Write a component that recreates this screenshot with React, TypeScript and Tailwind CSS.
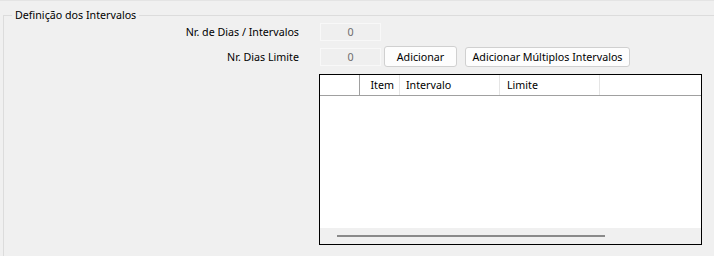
import React from "react";

export default function App() {
  const font = { fontFamily: '"Noto Sans", "Open Sans", sans-serif' };
  return (
    <div
      className="w-[714px] h-[256px] overflow-hidden bg-[#f0f0f0] border-t border-[#e4e4e4] text-[10.7px] leading-[14px] text-black whitespace-nowrap"
      style={font}
    >
      <fieldset className="ml-[3px] mt-[7px] w-[760px] h-[300px] border border-[#dcdcdc] px-0">
        <legend className="ml-[8px] px-[3px] leading-[14px]">Definição dos Intervalos</legend>
        <div className="mt-[1px] flex items-center h-[18px]">
          <div className="w-[295px] text-right">Nr. de Dias / Intervalos</div>
          <div className="ml-[21px] w-[61px] h-[18px] border border-[#f8f8f8] bg-[#efefef] text-[#6d6d6d] flex items-center justify-center">
            0
          </div>
        </div>
        <div className="mt-[5px] flex items-center h-[21px]">
          <div className="w-[295px] text-right">Nr. Dias Limite</div>
          <div className="ml-[21px] w-[61px] h-[18px] border border-[#f8f8f8] bg-[#efefef] text-[#6d6d6d] flex items-center justify-center">
            0
          </div>
          <button className="ml-[3px] w-[73px] h-[21px] rounded-[3px] border border-[#d0d0d0] bg-[#fdfdfd] flex items-center justify-center">
            Adicionar
          </button>
          <button className="ml-[8px] w-[165px] h-[20px] rounded-[3px] border border-[#d0d0d0] bg-[#fdfdfd] flex items-center justify-center">
            Adicionar Múltiplos Intervalos
          </button>
        </div>
        <div className="mt-[7px] ml-[315px] w-[383px] h-[171px] border border-black bg-white flex flex-col">
          <div className="flex h-[21px] border-b border-[#a0a0a0] bg-white">
            <div className="w-[40px] border-r border-[#a0a0a0]" />
            <div className="w-[40px] border-r border-[#e5e5e5] flex items-center justify-end pr-[5px]">Item</div>
            <div className="w-[100px] border-r border-[#e5e5e5] flex items-center pl-[6px]">Intervalo</div>
            <div className="w-[100px] border-r border-[#e5e5e5] flex items-center pl-[7px]">Limite</div>
            <div className="flex-1" />
          </div>
          <div className="flex-1" />
          <div className="h-[16px] bg-[#f0f0f0] flex items-center">
            <div className="ml-[17px] w-[268px] h-[2px] bg-[#8a8a8a]" />
          </div>
        </div>
      </fieldset>
    </div>
  );
}
